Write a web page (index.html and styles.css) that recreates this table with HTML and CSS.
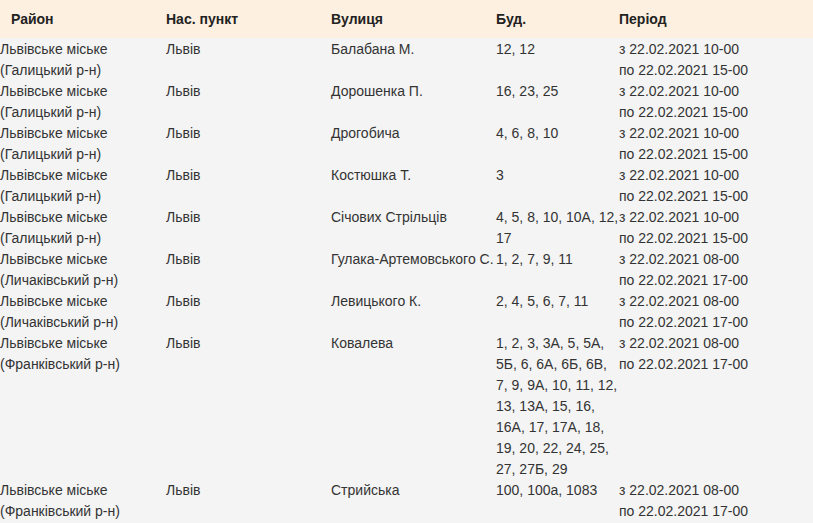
FILE: index.html
```html
<!DOCTYPE html>
<html lang="uk">
<head>
<meta charset="utf-8">
<link rel="stylesheet" href="styles.css">
</head>
<body>
<div class="table">
  <div class="row head">
    <div class="first">Район</div>
    <div>Нас. пункт</div>
    <div>Вулиця</div>
    <div>Буд.</div>
    <div>Період</div>
  </div>
  <div class="row body">
    <div>Львівське міське<br>(Галицький р-н)</div>
    <div>Львів</div>
    <div>Балабана М.</div>
    <div>12, 12</div>
    <div>з 22.02.2021 10-00<br>по 22.02.2021 15-00</div>

    <div>Львівське міське<br>(Галицький р-н)</div>
    <div>Львів</div>
    <div>Дорошенка П.</div>
    <div>16, 23, 25</div>
    <div>з 22.02.2021 10-00<br>по 22.02.2021 15-00</div>

    <div>Львівське міське<br>(Галицький р-н)</div>
    <div>Львів</div>
    <div>Дрогобича</div>
    <div>4, 6, 8, 10</div>
    <div>з 22.02.2021 10-00<br>по 22.02.2021 15-00</div>

    <div>Львівське міське<br>(Галицький р-н)</div>
    <div>Львів</div>
    <div>Костюшка Т.</div>
    <div>3</div>
    <div>з 22.02.2021 10-00<br>по 22.02.2021 15-00</div>

    <div>Львівське міське<br>(Галицький р-н)</div>
    <div>Львів</div>
    <div>Січових Стрільців</div>
    <div>4, 5, 8, 10, 10А, 12, 17</div>
    <div>з 22.02.2021 10-00<br>по 22.02.2021 15-00</div>

    <div>Львівське міське<br>(Личаківський р-н)</div>
    <div>Львів</div>
    <div>Гулака-Артемовського С.</div>
    <div>1, 2, 7, 9, 11</div>
    <div>з 22.02.2021 08-00<br>по 22.02.2021 17-00</div>

    <div>Львівське міське<br>(Личаківський р-н)</div>
    <div>Львів</div>
    <div>Левицького К.</div>
    <div>2, 4, 5, 6, 7, 11</div>
    <div>з 22.02.2021 08-00<br>по 22.02.2021 17-00</div>

    <div>Львівське міське<br>(Франківський р-н)</div>
    <div>Львів</div>
    <div>Ковалева</div>
    <div>1, 2, 3, 3А, 5, 5А, 5Б, 6, 6А, 6Б, 6В, 7, 9, 9А, 10, 11, 12, 13, 13А, 15, 16, 16А, 17, 17А, 18, 19, 20, 22, 24, 25, 27, 27Б, 29</div>
    <div>з 22.02.2021 08-00<br>по 22.02.2021 17-00</div>

    <div>Львівське міське<br>(Франківський р-н)</div>
    <div>Львів</div>
    <div>Стрийська</div>
    <div>100, 100a, 1083</div>
    <div>з 22.02.2021 08-00<br>по 22.02.2021 17-00</div>
  </div>
</div>
</body>
</html>
```

FILE: styles.css
```css
html, body {
  margin: 0;
  padding: 0;
  background: #f4f4f4;
}
body {
  font-family: "Liberation Sans", Arial, sans-serif;
  font-size: 14px;
  line-height: 21px;
  color: #333;
}
.row {
  display: grid;
  grid-template-columns: 166px 165px 165px 123px 1fr;
}
.head {
  background: #fdf0e0;
  height: 38px;
  align-items: center;
  font-weight: bold;
  color: #222;
}
.head .first {
  padding-left: 11px;
}
.body {
  padding-top: 1px;
}
```
